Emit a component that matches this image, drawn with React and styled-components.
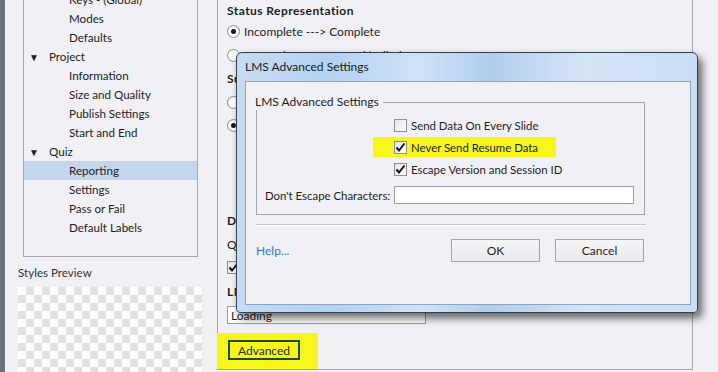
import React from "react";
import styled, { createGlobalStyle } from "styled-components";

const GlobalStyle = createGlobalStyle`
  html, body {
    margin: 0;
    padding: 0;
    background: #f0f0f5;
  }
  * {
    box-sizing: border-box;
  }
`;

const Screen = styled.div`
  position: relative;
  width: 718px;
  height: 372px;
  overflow: hidden;
  display: flex;
  background: #f0f0f5;
  font-family: Lato, "Noto Sans", sans-serif;
  font-size: 11.4px;
  color: #1e1e1e;
`;

const Strip = styled.div`
  width: 5px;
  flex: none;
  background: #6c7380;
`;

const LeftPanel = styled.div`
  width: 212px;
  flex: none;
  display: flex;
  flex-direction: column;
`;

const Tree = styled.div`
  margin: -11px 0 0 18px;
  width: 175px;
  border: 1px solid #a6a8b4;
  padding-bottom: 19px;
`;

const TreeRow = styled.div`
  height: 19px;
  display: flex;
  align-items: center;
  padding-left: ${({ $depth }) => ($depth ? 45 : 5)}px;
  background: ${({ $selected }) => ($selected ? "#c4d6ee" : "transparent")};
  white-space: nowrap;
  font-size: 11.6px;
`;

const Caret = styled.span`
  width: 20px;
  font-size: 10px;
  color: #222;
`;

const PreviewLabel = styled.div`
  margin: 6px 0 0 13px;
  height: 19px;
  display: flex;
  align-items: center;
  color: #333;
  font-size: 11.6px;
`;

const Checker = styled.div`
  margin: 5px 0 0 13px;
  width: 184px;
  flex: 1;
  background-color: #ffffff;
  background-image: conic-gradient(
    #e2e2e2 0 25%,
    #ffffff 0 50%,
    #e2e2e2 0 75%,
    #ffffff 0
  );
  background-size: 16px 16px;
`;

const RightPanel = styled.div`
  width: 476px;
  height: 370px;
  flex: none;
  border-left: 1px solid #a6a8b4;
  border-right: 1px solid #a6a8b4;
  border-bottom: 1px solid #a6a8b4;
  padding-left: 9px;
  display: flex;
  flex-direction: column;
`;

const Heading = styled.div`
  height: ${({ $h }) => $h || 24}px;
  display: flex;
  align-items: center;
  font-weight: 700;
  font-size: 12px;
  letter-spacing: 0.45px;
  white-space: nowrap;
`;

const Line = styled.div`
  height: ${({ $h }) => $h || 24}px;
  display: flex;
  align-items: center;
  gap: 4px;
  white-space: nowrap;
  font-size: 12px;
`;

const Radio = styled.span`
  width: 13px;
  height: 13px;
  border-radius: 50%;
  border: 1px solid #8c8c94;
  background: radial-gradient(circle, #ffffff 40%, #e8e8ec 100%);
  display: flex;
  align-items: center;
  justify-content: center;
  &::after {
    content: "";
    width: 5px;
    height: 5px;
    border-radius: 50%;
    background: ${({ $on }) => ($on ? "#1a1a1a" : "transparent")};
  }
`;

const Box = styled.span`
  width: 13px;
  height: 13px;
  flex: none;
  border: 1px solid #8e8f94;
  background: linear-gradient(135deg, #e4e4e8, #ffffff);
  display: flex;
  align-items: center;
  justify-content: center;
`;

const Field = styled.div`
  width: ${({ $w }) => $w}px;
  height: 18px;
  border: 1px solid #9a9ca6;
  background: #ffffff;
  display: flex;
  align-items: center;
  padding-left: 3px;
`;

const Highlight = styled.div`
  margin: 7px 0 0 -10px;
  width: 101px;
  height: 37px;
  background: #f6f51c;
  display: flex;
  align-items: flex-start;
  padding: 7px 0 0 11px;
`;

const AdvancedButton = styled.div`
  width: 72px;
  height: 20px;
  border: 2px solid #1f4a1a;
  display: flex;
  align-items: center;
  justify-content: center;
  color: #2a2a2a;
  font-size: 12px;
`;

const Dialog = styled.div`
  position: absolute;
  left: 236px;
  top: 52px;
  width: 462px;
  height: 261px;
  border: 1px solid #33404e;
  border-radius: 6px 6px 4px 4px;
  background: linear-gradient(
    90deg,
    #c6dbf3 0%,
    #b4d1f2 20%,
    #cfe2f6 40%,
    #b1cdee 55%,
    #d4e4f6 75%,
    #c9ddf4 100%
  );
  box-shadow: 4px 5px 9px rgba(0, 0, 0, 0.6);
  display: flex;
  flex-direction: column;
  padding: 0 6px 7px 8px;
`;

const TitleBar = styled.div`
  height: 28px;
  display: flex;
  align-items: center;
  padding-bottom: 2px;
  color: #1a1a1a;
  font-size: 12px;
`;

const Client = styled.div`
  flex: 1;
  border: 1px solid #8ea4be;
  background: #f0f0f5;
  padding: 20px 0 0 10px;
  display: flex;
  flex-direction: column;
`;

const Group = styled.div`
  position: relative;
  width: 389px;
  height: 113px;
  border: 1px solid #a2a4ae;
  padding: 11px 0 0 8px;
  display: grid;
  grid-template-columns: 129px 1fr;
  grid-template-rows: 22px 22px 22px 30px;
  align-items: center;
`;

const Legend = styled.div`
  position: absolute;
  left: -2px;
  top: -9px;
  padding-right: 4px;
  line-height: 16px;
  background: #f0f0f5;
  font-size: 12px;
`;

const CheckRow = styled.div`
  grid-column: 2;
  display: flex;
  align-items: center;
  gap: 4px;
  height: 20px;
  white-space: nowrap;
  width: fit-content;
  ${({ $mark }) =>
    $mark &&
    `
    background: #f6f51c;
    margin-left: -21px;
    padding: 0 18px 0 21px;
  `}
`;

const FieldLabel = styled.div`
  white-space: nowrap;
`;

const Separator = styled.div`
  margin-top: 9px;
  width: 390px;
  border-top: 1px solid #c4c6cc;
  border-bottom: 1px solid #ffffff;
`;

const Footer = styled.div`
  margin-top: 13px;
  width: 388px;
  display: flex;
  align-items: center;
  gap: 15px;
  font-size: 12px;
`;

const HelpLink = styled.div`
  flex: 1;
  color: #3b78c0;
`;

const Button = styled.div`
  width: 89px;
  height: 23px;
  border: 1px solid #a4a6ae;
  background: linear-gradient(#f6f6f8, #eaeaee);
  display: flex;
  align-items: center;
  justify-content: center;
`;

const Check = () => (
  <svg width="11" height="11" viewBox="0 0 11 11">
    <path d="M1.5 5.5 L4 8.5 L9.5 1.5" fill="none" stroke="#111" strokeWidth="2" />
  </svg>
);

const tree = [
  ["Keys - (Global)", 1],
  ["Modes", 1],
  ["Defaults", 1],
  ["Project", 0],
  ["Information", 1],
  ["Size and Quality", 1],
  ["Publish Settings", 1],
  ["Start and End", 1],
  ["Quiz", 0],
  ["Reporting", 1],
  ["Settings", 1],
  ["Pass or Fail", 1],
  ["Default Labels", 1],
];

export default function App() {
  return (
    <>
      <GlobalStyle />
      <Screen>
        <Strip />
        <LeftPanel>
          <Tree>
            {tree.map(([label, depth]) => (
              <TreeRow key={label} $depth={depth} $selected={label === "Reporting"}>
                {!depth && <Caret>▼</Caret>}
                {label}
              </TreeRow>
            ))}
          </Tree>
          <PreviewLabel>Styles Preview</PreviewLabel>
          <Checker />
        </LeftPanel>

        <RightPanel>
          <Heading $h={21}>Status Representation</Heading>
          <Line>
            <Radio $on />
            Incomplete ---&gt; Complete
          </Line>
          <Line>
            <Radio />
            Incomplete ---&gt; Passed/Failed
          </Line>
          <Heading $h={25}>Success/Completion Criteria</Heading>
          <Line>
            <Radio />
            Slide Views and/or Quiz
          </Line>
          <Line>
            <Radio $on />
            User Access
          </Line>
          <Line $h={75} />
          <Heading>Data To Report</Heading>
          <Line>Quiz: Percentage</Line>
          <Line>
            <Box>
              <Check />
            </Box>
            Interaction Data
          </Line>
          <Heading $h={27}>LMS Initialization Text</Heading>
          <Line $h={22}>
            <Field $w={199}>Loading</Field>
          </Line>
          <Highlight>
            <AdvancedButton>Advanced</AdvancedButton>
          </Highlight>
        </RightPanel>

        <Dialog>
          <TitleBar>LMS Advanced Settings</TitleBar>
          <Client>
            <Group>
              <Legend>LMS Advanced Settings</Legend>
              <CheckRow>
                <Box />
                Send Data On Every Slide
              </CheckRow>
              <CheckRow $mark>
                <Box>
                  <Check />
                </Box>
                Never Send Resume Data
              </CheckRow>
              <CheckRow>
                <Box>
                  <Check />
                </Box>
                Escape Version and Session ID
              </CheckRow>
              <FieldLabel>Don't Escape Characters:</FieldLabel>
              <Field $w={240} />
            </Group>
            <Separator />
            <Footer>
              <HelpLink>Help...</HelpLink>
              <Button>OK</Button>
              <Button>Cancel</Button>
            </Footer>
          </Client>
        </Dialog>
      </Screen>
    </>
  );
}
